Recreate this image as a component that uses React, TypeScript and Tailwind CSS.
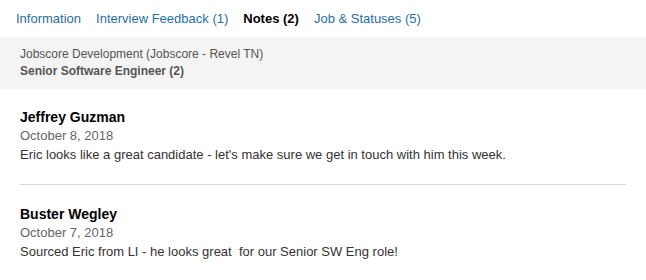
const tabs = [
  { label: "Information", active: false },
  { label: "Interview Feedback (1)", active: false },
  { label: "Notes (2)", active: true },
  { label: "Job & Statuses (5)", active: false },
];

const notes = [
  {
    author: "Jeffrey Guzman",
    date: "October 8, 2018",
    body: "Eric looks like a great candidate - let's make sure we get in touch with him this week.",
  },
  {
    author: "Buster Wegley",
    date: "October 7, 2018",
    body: "Sourced Eric from LI - he looks great  for our Senior SW Eng role!",
  },
];

const App = () => {
  return (
    <div className="w-[646px] h-[280px] bg-white font-['Liberation_Sans',Arial,sans-serif] overflow-hidden">
      <div className="flex items-center h-[37px] px-4 gap-[15px] text-[13px]">
        {tabs.map((t) => (
          <a
            key={t.label}
            href="#"
            className={t.active ? "font-bold text-black" : "text-[#1f6ea6]"}
          >
            {t.label}
          </a>
        ))}
      </div>
      <div className="bg-[#f4f4f4] px-5 pt-[9px] pb-[9px] text-[12px] leading-[17px] text-[#555]">
        <div>Jobscore Development (Jobscore - Revel TN)</div>
        <div className="font-bold">Senior Software Engineer (2)</div>
      </div>
      <div className="px-5">
        {notes.map((n, i) =>
          i === 0 ? (
            <div key={n.author} className="pt-[19px] pb-[19px] border-b border-[#d4d4d4]">
              <div className="text-[14px] leading-[18px] font-bold text-black">{n.author}</div>
              <div className="text-[13px] leading-[19px] text-[#666]">{n.date}</div>
              <div className="text-[13px] leading-[20px] text-[#333] whitespace-pre">{n.body}</div>
            </div>
          ) : (
            <div key={n.author} className="py-5">
              <div className="text-[14px] leading-[18px] font-bold text-black">{n.author}</div>
              <div className="text-[13px] leading-[19px] text-[#666]">{n.date}</div>
              <div className="text-[13px] leading-[20px] text-[#333] whitespace-pre">{n.body}</div>
            </div>
          )
        )}
      </div>
    </div>
  );
};

export default App;
